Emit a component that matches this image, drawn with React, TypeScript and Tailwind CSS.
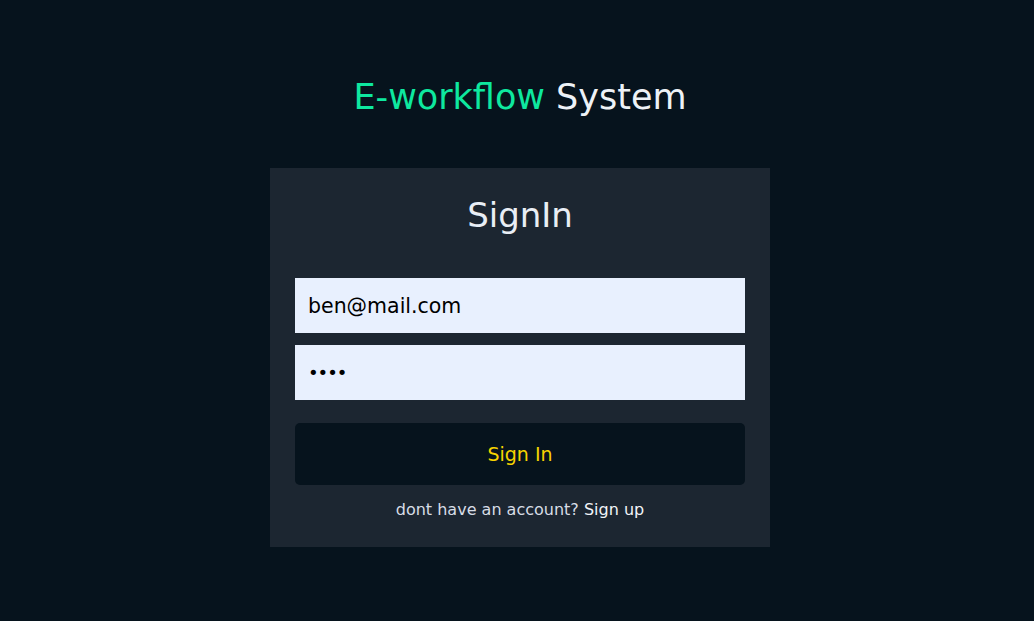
import { useState } from "react";

const font = { fontFamily: '"DejaVu Sans", "Noto Sans", sans-serif' };

export default function App() {
  const [email, setEmail] = useState("ben@mail.com");
  const [password, setPassword] = useState("1234");

  return (
    <div className="flex min-h-[621px] w-full flex-col items-center bg-[#06131d] pl-[6px]" style={font}>
      <h1 className="mt-[72px] text-[35px] leading-[50px] text-[#edf2f7]">
        <span className="text-[#0ee89f]">E-workflow</span> System
      </h1>

      <form
        className="mt-[46px] flex w-[500px] flex-col bg-[#1c2631] px-[25px] pb-[26px] pt-[24px]"
        onSubmit={(e) => e.preventDefault()}
      >
        <h2 className="text-center text-[34px] leading-[46px] text-[#e9eef5]">SignIn</h2>

        <input
          className="mt-[40px] h-[55px] w-full bg-[#e8f0fe] px-[13px] text-[20.5px] text-black outline-none"
          value={email}
          onChange={(e) => setEmail(e.target.value)}
        />
        <input
          type="password"
          className="mt-[12px] h-[55px] w-full bg-[#e8f0fe] px-[13px] text-[18px] tracking-[-1px] text-black outline-none"
          value={password}
          onChange={(e) => setPassword(e.target.value)}
        />

        <button
          type="submit"
          className="mt-[23px] h-[62px] w-full rounded-[5px] bg-[#06131d] text-[19px] text-[#f7d300]"
        >
          Sign In
        </button>

        <p className="mt-[14px] text-center text-[16px] leading-[22px] text-[#d7dde6]">
          dont have an account? <a className="text-[#f1f4f8]">Sign up</a>
        </p>
      </form>
    </div>
  );
}
